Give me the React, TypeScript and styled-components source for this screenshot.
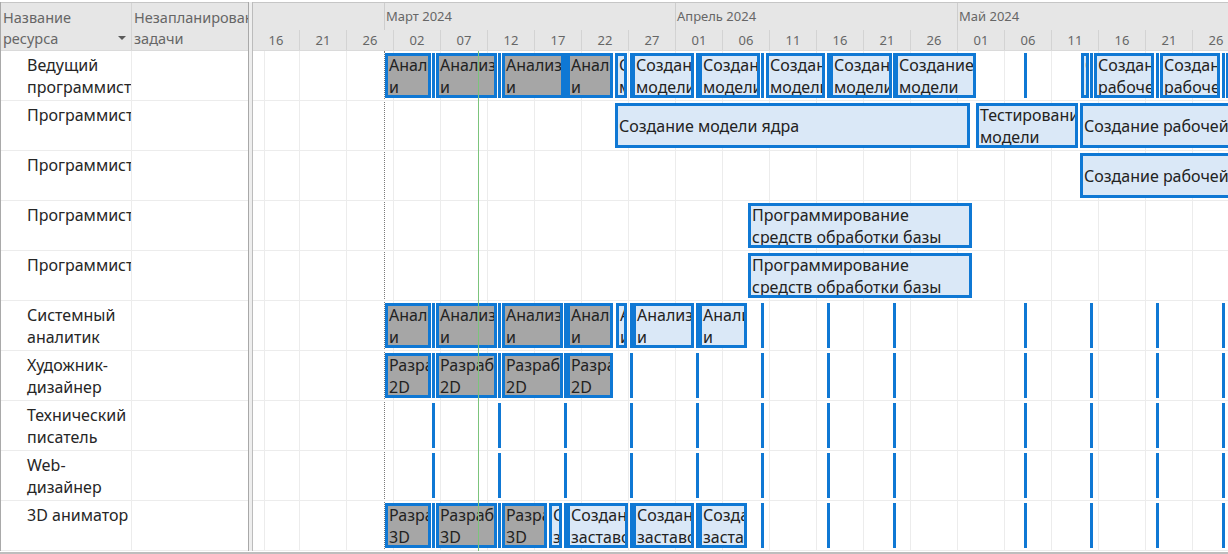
import React from 'react';
import styled, { createGlobalStyle } from 'styled-components';

const FONT = `"Noto Sans", "Open Sans", "Liberation Sans", sans-serif`;
const BLUE = '#0f78d4';
const ORIGIN = 253;
const MARKERS = [432, 498, 564, 630, 696, 761, 827, 893, 1024, 1090, 1156, 1222];

type Kind = 'done' | 'plan';
type Bar = { l: number; r: number; kind: Kind; lines: string[] };
type Row = { name: string[]; bars: Bar[]; markers: boolean };

const g = (l: number, r: number, lines: string[]): Bar => ({ l, r, kind: 'done', lines });
const b = (l: number, r: number, lines: string[]): Bar => ({ l, r, kind: 'plan', lines });

const AN = ['Анализ', 'и'];
const CM = ['Создание', 'модели'];
const CR = ['Создание', 'рабочей'];
const R2 = ['Разработка', '2D'];
const R3 = ['Разработка', '3D'];
const CZ = ['Создание', 'заставок'];
const PR = ['Программирование', 'средств обработки базы'];

const ROWS: Row[] = [
  {
    name: ['Ведущий', 'программист'],
    markers: true,
    bars: [
      g(385, 431, AN), g(436, 497, AN), g(502, 564, AN), g(567, 613, AN),
      b(615, 627, CM), b(632, 694, CM), b(699, 760, CM), b(766, 825, CM),
      b(830, 892, CM), b(895, 976, CM),
      b(1081, 1089, CR), b(1094, 1154, CR), b(1160, 1220, CR), b(1226, 1300, CR),
    ],
  },
  {
    name: ['Программист'],
    markers: false,
    bars: [
      b(615, 970, ['Создание модели ядра']),
      b(976, 1078, ['Тестирование', 'модели']),
      b(1080, 1500, ['Создание рабочей документации']),
    ],
  },
  { name: ['Программист'], markers: false, bars: [b(1080, 1500, ['Создание рабочей документации'])] },
  { name: ['Программист'], markers: false, bars: [b(748, 972, PR)] },
  { name: ['Программист'], markers: false, bars: [b(748, 972, PR)] },
  {
    name: ['Системный', 'аналитик'],
    markers: true,
    bars: [
      g(385, 431, AN), g(436, 497, AN), g(502, 563, AN), g(567, 613, AN),
      b(616, 627, AN), b(633, 694, AN), b(699, 747, AN),
    ],
  },
  {
    name: ['Художник-', 'дизайнер'],
    markers: true,
    bars: [g(385, 431, R2), g(436, 497, R2), g(502, 563, R2), g(567, 613, R2)],
  },
  { name: ['Технический', 'писатель'], markers: true, bars: [] },
  { name: ['Web-', 'дизайнер'], markers: true, bars: [] },
  {
    name: ['3D аниматор'],
    markers: true,
    bars: [
      g(385, 431, R3), g(436, 497, R3), g(502, 547, R3),
      b(549, 562, CZ), b(567, 628, CZ), b(633, 694, CZ), b(699, 747, CZ),
    ],
  },
];

const MONTHS = [
  { label: '', width: 131 },
  { label: 'Март 2024', width: 291 },
  { label: 'Апрель 2024', width: 282 },
  { label: 'Май 2024', width: 400 },
];

const DAYS = ['16', '21', '26', '02', '07', '12', '17', '22', '27', '01', '06', '11', '16', '21', '26', '01', '06', '11', '16', '21', '26'];

const Global = createGlobalStyle`
  html, body { margin: 0; padding: 0; background: #fff; }
  body { font-family: ${FONT}; }
  #root { width: 1228px; height: 554px; overflow: hidden; }
`;

const Page = styled.div`
  width: 1228px;
  height: 554px;
  padding-top: 2px;
  box-sizing: border-box;
  display: flex;
  flex-direction: column;
  overflow: hidden;
  background: #fff;
`;

const Main = styled.div`
  display: flex;
  height: 549px;
  flex: none;
`;

const BottomEdge = styled.div`
  margin-top: 1px;
  height: 2px;
  background: #bdbdbd;
  flex: none;
`;

const Table = styled.div`
  width: 248px;
  flex: none;
  border-left: 1px solid #a9a9a9;
  box-sizing: border-box;
  display: flex;
  flex-direction: column;
`;

const TableHead = styled.div`
  height: 49px;
  flex: none;
  box-sizing: border-box;
  border-top: 1px solid #c6c6c6;
  border-bottom: 1px solid #dadada;
  background: #e6e6e6;
  display: grid;
  grid-template-columns: 131px 1fr;
`;

const HeadCell = styled.div<{ $last?: boolean }>`
  display: flex;
  padding: 4px 0 0 2px;
  box-sizing: border-box;
  border-right: ${(p) => (p.$last ? 'none' : '1px solid #d4d4d4')};
  overflow: hidden;
  color: #666;
  font-size: 14.5px;
  line-height: 21px;
`;

const HeadText = styled.div`
  flex: 1;
  min-width: 0;
  white-space: nowrap;
`;

const Line = styled.span`
  display: block;
  white-space: nowrap;
`;

const SortArrow = styled.span`
  align-self: flex-end;
  flex: none;
  width: 0;
  height: 0;
  margin: 0 5px 10px 0;
  border-left: 4px solid transparent;
  border-right: 4px solid transparent;
  border-top: 4px solid #5a5a5a;
`;

const TableRow = styled.div`
  height: 50px;
  flex: none;
  box-sizing: border-box;
  border-bottom: 1px solid #ececec;
  display: grid;
  grid-template-columns: 131px 1fr;
`;

const NameCell = styled.div`
  padding: 3px 0 0 26px;
  box-sizing: border-box;
  border-right: 1px solid #ececec;
  overflow: hidden;
  font-size: 16px;
  line-height: 22px;
  color: #262626;
`;

const TaskCell = styled.div`
  overflow: hidden;
`;

const Splitter = styled.div`
  width: 5px;
  flex: none;
  box-sizing: border-box;
  border-left: 1px solid #a8a8a8;
  border-right: 1px solid #bcbcbc;
  background: #eeeeee;
`;

const Gantt = styled.div`
  flex: 1;
  min-width: 0;
  display: flex;
  flex-direction: column;
  overflow: hidden;
`;

const GanttHead = styled.div`
  height: 49px;
  flex: none;
  box-sizing: border-box;
  border-top: 1px solid #c6c6c6;
  border-bottom: 1px solid #dadada;
  background: #e6e6e6;
  display: flex;
  flex-direction: column;
  overflow: hidden;
`;

const MonthTier = styled.div`
  display: flex;
  height: 27px;
  flex: none;
`;

const MonthCell = styled.div<{ $first?: boolean }>`
  flex: none;
  box-sizing: border-box;
  border-left: ${(p) => (p.$first ? 'none' : '1px solid #cdcdcd')};
  padding-left: 1px;
  font-size: 13px;
  line-height: 27px;
  color: #666;
  white-space: nowrap;
  overflow: hidden;
`;

const DayTier = styled.div`
  display: flex;
  height: 20px;
  flex: none;
`;

const DayCell = styled.div<{ $first?: boolean }>`
  flex: none;
  width: ${(p) => (p.$first ? '46px' : '47px')};
  box-sizing: border-box;
  border-left: ${(p) => (p.$first ? 'none' : '1px solid #d3d3d3')};
  text-align: center;
  font-size: 13px;
  line-height: 20px;
  color: #666;
`;

const GanttBody = styled.div`
  position: relative;
  flex: 1;
  background-image: repeating-linear-gradient(
    to right,
    #ececec 0,
    #ececec 1px,
    transparent 1px,
    transparent 47px
  );
  background-position: 46px 0;
`;

const GanttRow = styled.div`
  position: relative;
  height: 50px;
  box-sizing: border-box;
  border-bottom: 1px solid #ececec;
`;

const BarBox = styled.div<{ $kind: Kind }>`
  position: absolute;
  top: 2px;
  height: 45px;
  box-sizing: border-box;
  border: 3px solid ${BLUE};
  background: ${(p) => (p.$kind === 'done' ? '#a6a6a6' : '#dae8f7')};
  overflow: hidden;
  display: flex;
  flex-direction: column;
  justify-content: center;
  padding-left: 1px;
  font-size: 16px;
  line-height: 22px;
  color: #222;
  z-index: 1;
`;

const Marker = styled.div`
  position: absolute;
  top: 2px;
  width: 3px;
  height: 45px;
  background: ${BLUE};
  z-index: 1;
`;

const StartLine = styled.div`
  position: absolute;
  top: 0;
  bottom: 0;
  left: 131px;
  border-left: 1px dotted #7a7a7a;
`;

const TodayLine = styled.div`
  position: absolute;
  top: 0;
  bottom: 0;
  left: 225px;
  width: 1px;
  background: #7cc47c;
  z-index: 2;
`;

export default function App() {
  return (
    <Page>
      <Global />
      <Main>
        <Table>
          <TableHead>
            <HeadCell>
              <HeadText>
                <Line>Название</Line>
                <Line>ресурса</Line>
              </HeadText>
              <SortArrow />
            </HeadCell>
            <HeadCell $last>
              <HeadText>
                <Line>Незапланированные</Line>
                <Line>задачи</Line>
              </HeadText>
            </HeadCell>
          </TableHead>
          {ROWS.map((row, i) => (
            <TableRow key={i}>
              <NameCell>
                {row.name.map((n, j) => (
                  <Line key={j}>{n}</Line>
                ))}
              </NameCell>
              <TaskCell />
            </TableRow>
          ))}
        </Table>
        <Splitter />
        <Gantt>
          <GanttHead>
            <MonthTier>
              {MONTHS.map((m, i) => (
                <MonthCell key={i} $first={i === 0} style={{ width: m.width }}>
                  {m.label}
                </MonthCell>
              ))}
            </MonthTier>
            <DayTier>
              {DAYS.map((d, i) => (
                <DayCell key={i} $first={i === 0}>
                  {d}
                </DayCell>
              ))}
            </DayTier>
          </GanttHead>
          <GanttBody>
            <StartLine />
            <TodayLine />
            {ROWS.map((row, i) => (
              <GanttRow key={i}>
                {row.markers &&
                  MARKERS.map((x) => <Marker key={x} style={{ left: x - ORIGIN }} />)}
                {row.bars.map((bar, j) => (
                  <BarBox
                    key={j}
                    $kind={bar.kind}
                    style={{ left: bar.l - ORIGIN, width: bar.r - bar.l }}
                  >
                    {bar.lines.map((t, k) => (
                      <Line key={k}>{t}</Line>
                    ))}
                  </BarBox>
                ))}
              </GanttRow>
            ))}
          </GanttBody>
        </Gantt>
      </Main>
      <BottomEdge />
    </Page>
  );
}
